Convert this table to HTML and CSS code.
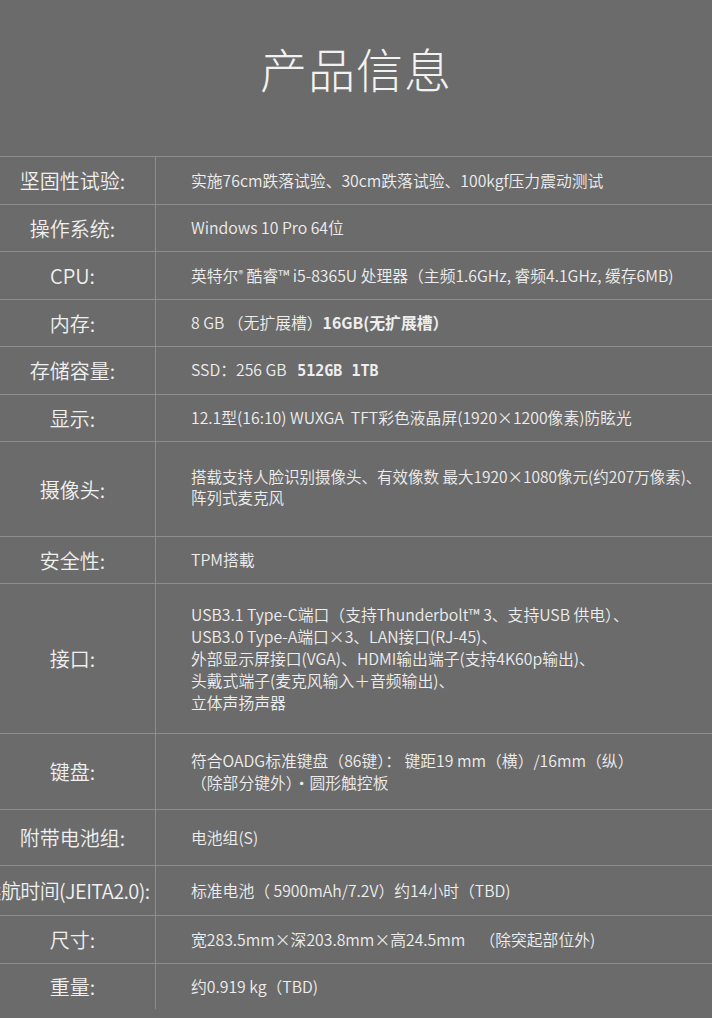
FILE: index.html
```html
<!DOCTYPE html>
<html lang="zh-CN">
<head>
<meta charset="utf-8">
<title>产品信息</title>
<link rel="stylesheet" href="styles.css">
</head>
<body>
<div class="page">
  <header class="hero">
    <h1 class="title">产品信息</h1>
  </header>
  <div class="spec">
    <div class="row r48"><div class="label">坚固性试验:</div><div class="value">实施76cm跌落试验、30cm跌落试验、100kgf压力震动测试</div></div>
    <div class="row r47"><div class="label">操作系统:</div><div class="value">Windows 10 Pro 64位</div></div>
    <div class="row r48"><div class="label">CPU:</div><div class="value">英特尔<sup class="mk">®</sup> 酷睿™ i5-8365U 处理器（主频1.6GHz, 睿频4.1GHz, 缓存6MB)</div></div>
    <div class="row r47"><div class="label">内存:</div><div class="value">8 GB （无扩展槽）<b class="strong">16GB(无扩展槽）</b></div></div>
    <div class="row r48"><div class="label">存储容量:</div><div class="value">SSD：256 GB &nbsp;&nbsp;<b class="strong mono">512GB 1TB</b></div></div>
    <div class="row r47"><div class="label">显示:</div><div class="value">12.1型(16:10) WUXGA&nbsp; TFT彩色液晶屏(1920×1200像素)防眩光</div></div>
    <div class="row r95"><div class="label">摄像头:</div><div class="value wide lh21">搭载支持人脸识别摄像头、有效像数 最大1920×1080像元(约207万像素)、<br>阵列式麦克风</div></div>
    <div class="row r47"><div class="label">安全性:</div><div class="value">TPM搭載</div></div>
    <div class="row r150"><div class="label">接口:</div><div class="value lh22">USB3.1 Type-C端口（支持Thunderbolt™ 3、支持USB 供电）、<br>USB3.0 Type-A端口×3、LAN接口(RJ-45)、<br>外部显示屏接口(VGA)、HDMI输出端子(支持4K60p输出)、<br>头戴式端子(麦克风输入＋音频输出)、<br>立体声扬声器</div></div>
    <div class="row r76"><div class="label">键盘:</div><div class="value lh22">符合OADG标准键盘（86键）： 键距19 mm（横）/16mm（纵）<br>（除部分键外）・圆形触控板</div></div>
    <div class="row r56"><div class="label">附带电池组:</div><div class="value">电池组(S)</div></div>
    <div class="row r50"><div class="label long">续航时间(JEITA2.0):</div><div class="value">标准电池（ 5900mAh/7.2V）约14小时（TBD)</div></div>
    <div class="row r48"><div class="label">尺寸:</div><div class="value">宽283.5mm×深203.8mm×高24.5mm&nbsp;&nbsp;&nbsp;&nbsp;（除突起部位外)</div></div>
    <div class="row r45 last"><div class="label">重量:</div><div class="value">约0.919 kg（TBD)</div></div>
  </div>
</div>
</body>
</html>
```

FILE: styles.css
```css
html, body {
  margin: 0;
  padding: 0;
  background: #6b6b6b;
}
body {
  font-family: "Noto Sans CJK SC", "Noto Sans", sans-serif;
  color: #efefef;
  overflow: hidden;
}
.page {
  width: 712px;
  height: 1018px;
  overflow: hidden;
  background: #6b6b6b;
}
.hero {
  height: 156px;
  display: flex;
  justify-content: center;
  border-bottom: 1px solid #8e8e8e;
}
.title {
  margin: 36px 0 0;
  font-size: 47px;
  font-weight: 300;
  line-height: 64px;
  letter-spacing: 1px;
  color: #f2f2f2;
}
.spec {
  display: flex;
  flex-direction: column;
}
.row {
  display: grid;
  grid-template-columns: 156px 1fr;
  box-sizing: border-box;
  border-bottom: 1px solid #8e8e8e;
}
.row.last { border-bottom: none; }
.r45 { height: 45px; }
.r47 { height: 47px; }
.r48 { height: 48px; }
.r50 { height: 50px; }
.r56 { height: 56px; }
.r76 { height: 76px; }
.r95 { height: 95px; }
.r150 { height: 150px; }
.label {
  display: flex;
  align-items: center;
  justify-content: center;
  padding-right: 10px;
  border-right: 1px solid #8e8e8e;
  font-size: 20px;
  font-weight: 350;
  white-space: nowrap;
  color: #f0f0f0;
  min-width: 0;
}
.label.long {
  padding-right: 24px;
  letter-spacing: -0.6px;
}
.value {
  display: block;
  align-content: center;
  padding-left: 35px;
  font-size: 15.8px;
  font-weight: 350;
  white-space: nowrap;
  color: #eeeeee;
  line-height: 22px;
}
.value.lh21 { line-height: 21px; padding-bottom: 4px; }
.value.lh22 { line-height: 22px; }
.value.wide { font-size: 15.5px; letter-spacing: 0; }
.strong { font-weight: 700; }
.mono { font-family: "DejaVu Sans Mono", "Noto Sans CJK SC", monospace; font-size: 15px; }
.mk { font-size: 10px; vertical-align: 4px; line-height: 0; }
```
